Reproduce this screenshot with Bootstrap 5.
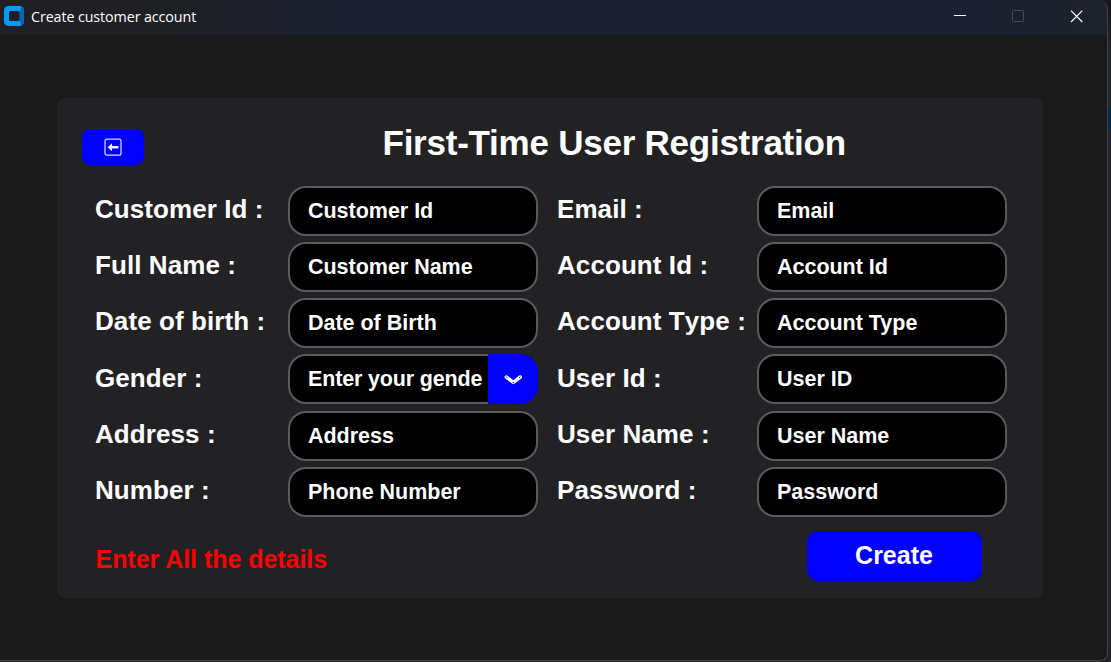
<!DOCTYPE html>
<html lang="en">
<head>
<meta charset="utf-8">
<title>Create customer account</title>
<link href="https://cdn.jsdelivr.net/npm/bootstrap@5.3.0/dist/css/bootstrap.min.css" rel="stylesheet">
<style>
  body{font-family:"Liberation Sans",Arial,sans-serif;color:#fff;height:662px;overflow:hidden;background:linear-gradient(#161616 0 10px,#25282b 50px 105px,#032a47 107px 125px,#222327 140px)}
  .app-window{width:1108px;height:661px;background:#1a1a1a;border-right:1px solid #434343;border-bottom:1px solid #434343;border-radius:0 8px 8px 0;overflow:hidden}
  .title-bar{height:35px;background:linear-gradient(90deg,#202022 0,#1f2023 150px,#1c2030 330px,#1b2030 1000px,#1d222b 1108px);padding:0 24px 2px 4px}
  .app-icon{margin-top:-1px}
  .caption-text{font-family:"Open Sans","Noto Sans",sans-serif;font-size:14.3px;letter-spacing:-.1px;margin-left:7px}
  .win-controls{gap:45px}
  .panel{width:986px;height:500px;margin:63px 0 0 57px;background:#222224;border-radius:8px;padding:31px 36px 17px 25px}
  .back-btn{width:62px;height:36px;border-radius:8px;background:#00f;border:0}
  .heading{font-size:35px;line-height:40px;font-weight:700;letter-spacing:-.24px;margin:-6px 0 0 238.5px;white-space:nowrap}
  .fields{margin:20.8px 0 0 13px;display:grid;grid-template-columns:193px 250px 219px 250px;column-gap:0;row-gap:6.2px}
  .gap-label{padding-left:19px}
  .field-label{font-size:26px;line-height:30px;font-weight:700;padding-top:8.2px;white-space:nowrap;font-kerning:none;letter-spacing:.08px}
  .entry,.entry:focus{height:50px;border:2px solid #565b5e;border-radius:18px;background:#000;color:#fff;font-size:21.5px;letter-spacing:-.02px;font-weight:700;padding:1px 18px 0;box-shadow:none}
  .entry::placeholder{color:#fff;opacity:1}
  .combo .entry{padding-right:0;width:200px;border-radius:18px 0 0 18px;border-right:0;flex:none;letter-spacing:-.16px}
  .drop-btn{width:50px;height:50px;background:#00f;border:0;border-radius:0 18px 18px 0}
  .footer-row{margin:14.2px 0 0 13.5px}
  .notice{color:#f00;font-size:25px;line-height:30px;font-weight:700;padding-top:13px;letter-spacing:-.04px}
  .create-btn,.create-btn:hover{width:175px;height:50px;margin-right:25px;border-radius:11px;background:#00f;color:#fff;border:0;font-size:25px;font-weight:700;padding:0 1px 0 0}
</style>
</head>
<body>
<div class="app-window">
  <header class="title-bar d-flex align-items-center">
    <svg class="app-icon" width="20" height="20" viewBox="0 0 20 20"><rect width="20" height="20" rx="4.5" fill="#0799ff"/><path d="M15 0Q20 0 20 5V15Q20 20 15 20L15.5 15V5Z" fill="#0862b5"/><path d="M12 0H16.5Q18 3 15.5 5H12ZM12 20H16.5Q18 17 15.5 15H12Z" fill="#0799ff"/><rect x="5" y="5" width="10.5" height="10" rx="1.5" fill="#1d2024"/></svg>
    <span class="caption-text">Create customer account</span>
    <div class="win-controls d-flex align-items-center ms-auto">
      <svg width="13" height="14"><path d="M0 5.5H12" stroke="#fff"/></svg>
      <svg width="13" height="14"><rect x=".5" y=".5" width="11" height="11" rx="1" fill="none" stroke="#464958"/></svg>
      <svg width="13" height="14"><path d="M1 .7L12.3 12M12.3 .7L1 12" stroke="#fff" stroke-width="1.2"/></svg>
    </div>
  </header>
  <main class="panel">
    <div class="d-flex">
      <button class="back-btn btn p-0 d-flex align-items-center justify-content-center" aria-label="Back">
        <svg width="18" height="18" viewBox="0 0 18 18"><rect x="1" y="1.2" width="16" height="16" rx="2" fill="none" stroke="#dedeff" stroke-width="1.2"/><path d="M3.7 9.2L8 5.2V8H14.5V10.4H8V13.2Z" fill="#f2f2ff"/></svg>
      </button>
      <h1 class="heading">First-Time User Registration</h1>
    </div>
    <form class="fields">
      <label class="field-label">Customer Id :</label><input class="form-control entry" placeholder="Customer Id">
      <label class="field-label gap-label">Email :</label><input class="form-control entry" placeholder="Email">
      <label class="field-label">Full Name :</label><input class="form-control entry" placeholder="Customer Name">
      <label class="field-label gap-label">Account Id :</label><input class="form-control entry" placeholder="Account Id">
      <label class="field-label">Date of birth :</label><input class="form-control entry" placeholder="Date of Birth">
      <label class="field-label gap-label">Account Type :</label><input class="form-control entry" placeholder="Account Type">
      <label class="field-label">Gender :</label>
      <div class="combo d-flex"><input class="form-control entry" placeholder="Enter your gende"><button type="button" class="drop-btn btn p-0 d-flex align-items-center justify-content-center" aria-label="Choose"><svg width="18" height="12" viewBox="0 0 18 12"><path d="M2.3 4L9.3 9.4L16.3 4" fill="none" stroke="#fff" stroke-width="3.5" stroke-linecap="round" stroke-linejoin="round"/><path d="M2.4 4l.8 .6M16.2 4l-.8 .6M8.8 9.6h1" stroke="#00f" stroke-width="1" stroke-linecap="round"/></svg></button></div>
      <label class="field-label gap-label">User Id :</label><input class="form-control entry" placeholder="User ID">
      <label class="field-label">Address :</label><input class="form-control entry" placeholder="Address">
      <label class="field-label gap-label">User Name :</label><input class="form-control entry" placeholder="User Name">
      <label class="field-label">Number :</label><input class="form-control entry" placeholder="Phone Number">
      <label class="field-label gap-label">Password :</label><input class="form-control entry" placeholder="Password">
    </form>
    <div class="footer-row d-flex justify-content-between">
      <div class="notice">Enter All the details</div>
      <button class="create-btn btn">Create</button>
    </div>
  </main>
</div>
<script src="https://cdn.jsdelivr.net/npm/bootstrap@5.3.0/dist/js/bootstrap.bundle.min.js"></script>
</body>
</html>
